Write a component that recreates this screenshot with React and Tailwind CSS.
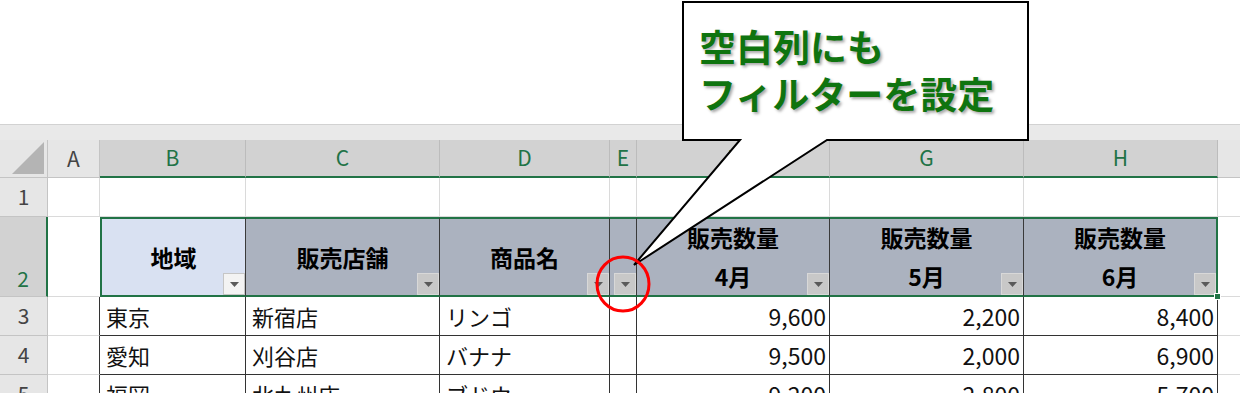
import React from "react";

const FONT = { fontFamily: '"Noto Sans CJK JP", "Noto Sans", sans-serif' };

function FilterBtn({ light }) {
  return (
    <div
      className={
        "absolute right-0 bottom-0 w-[22px] h-[22px] flex items-center justify-center border " +
        (light ? "bg-[#f3f3f3] border-[#c6c6c6]" : "bg-[#c8c8c8] border-[#d8d8d8]")
      }
    >
      <svg width="9" height="5" viewBox="0 0 9 5">
        <path d="M0 0 H9 L4.5 5 Z" fill="#5a5a5a" />
      </svg>
    </div>
  );
}

const colLetters = ["B", "C", "D", "E", "F", "G", "H"];

const data = [
  ["3", "東京", "新宿店", "リンゴ", "9,600", "2,200", "8,400"],
  ["4", "愛知", "刈谷店", "バナナ", "9,500", "2,000", "6,900"],
  ["5", "福岡", "北九州店", "ブドウ", "9,200", "2,800", "5,700"],
];

export default function App() {
  return (
    <div className="relative w-[1240px] h-[393px] overflow-hidden bg-white text-black" style={FONT}>
      {/* top white area */}
      <div className="h-[124px] bg-white" />
      {/* band */}
      <div className="h-[16px] bg-[#e9e9e9] border-t border-[#d2d2d2]" />

      <div className="grid grid-cols-[48px_52px_146px_194px_170px_27px_193px_194px_194px_1fr]">
        {/* Column headers */}
        <div className="h-[38px] bg-[#e6e6e6] border-r border-b border-[#c4c4c4] relative flex items-end justify-end pr-[3px] pb-[3px]">
          <svg width="32" height="32" viewBox="0 0 32 32">
            <path d="M32 0 V32 H0 Z" fill="#b4b4b4" />
          </svg>
        </div>
        <div className="h-[38px] bg-[#e6e6e6] border-r border-b border-[#c4c4c4] flex items-center justify-center text-[21px] text-[#444]">
          A
        </div>
        {colLetters.map((c) => (
          <div
            key={c}
            className="h-[38px] bg-[#d2d2d2] border-r border-[#bcbcbc] border-b-2 border-b-[#217346] flex items-center justify-center text-[21px] text-[#217346]"
          >
            {c}
          </div>
        ))}
        <div className="h-[38px] bg-[#e6e6e6] border-b border-[#c4c4c4]" />

        {/* Row 1 */}
        <div className="h-[39px] bg-[#e6e6e6] border-r border-b border-[#c4c4c4] flex items-center justify-center text-[21px] text-[#444]">
          1
        </div>
        {Array.from({ length: 8 }).map((_, i) => (
          <div key={i} className="h-[39px] bg-white border-r border-b border-[#dadada]" />
        ))}
        <div className="h-[39px] bg-white border-b border-[#dadada]" />

        {/* Row 2 */}
        <div className="h-[80px] bg-[#d2d2d2] border-r-2 border-r-[#217346] border-b border-b-[#c4c4c4] flex items-end justify-center pb-[2px] text-[21px] text-[#217346]">
          2
        </div>
        <div className="h-[80px] bg-white border-b border-[#dadada]" />
        <div className="h-[80px] relative bg-[#d9e1f2] border-l-2 border-t-2 border-b-2 border-[#217346] border-r border-r-[#3a3a3a] flex items-center justify-center text-[23px] font-bold">
          地域
          <FilterBtn light />
        </div>
        <div className="h-[80px] relative bg-[#abb2bf] border-t-2 border-b-2 border-[#217346] border-r border-r-[#3a3a3a] flex items-center justify-center text-[23px] font-bold">
          販売店舗
          <FilterBtn />
        </div>
        <div className="h-[80px] relative bg-[#abb2bf] border-t-2 border-b-2 border-[#217346] border-r border-r-[#3a3a3a] flex items-center justify-center text-[23px] font-bold">
          商品名
          <FilterBtn />
        </div>
        <div className="h-[80px] relative bg-[#abb2bf] border-t-2 border-b-2 border-[#217346] border-r border-r-[#3a3a3a]">
          <FilterBtn />
        </div>
        {["4月", "5月", "6月"].map((m, i) => (
          <div
            key={m}
            className={
              "h-[80px] relative bg-[#abb2bf] border-t-2 border-b-2 border-[#217346] flex flex-col items-center justify-center text-[23px] font-bold leading-[39px] " +
              (i === 2 ? "border-r-2" : "border-r border-r-[#3a3a3a]")
            }
          >
            <div>販売数量</div>
            <div>{m}</div>
            <FilterBtn />
            {i === 2 && (
              <div className="absolute -right-[5px] -bottom-[5px] w-[7px] h-[7px] bg-[#217346] border border-white z-[5]" />
            )}
          </div>
        ))}
        <div className="h-[80px] bg-white border-b border-[#dadada]" />

        {/* Data rows */}
        {data.map((r) => (
          <React.Fragment key={r[0]}>
            <div className="h-[39px] bg-[#e6e6e6] border-r border-b border-[#c4c4c4] flex items-center justify-center text-[21px] text-[#444]">
              {r[0]}
            </div>
            <div className="h-[39px] bg-white border-r border-r-[#333] border-b border-b-[#dadada]" />
            <div className="h-[39px] bg-white border-r border-b border-[#333] flex items-center pl-[6px] text-[22px] text-[#111]">
              {r[1]}
            </div>
            <div className="h-[39px] bg-white border-r border-b border-[#333] flex items-center pl-[6px] text-[22px] text-[#111]">
              {r[2]}
            </div>
            <div className="h-[39px] bg-white border-r border-b border-[#333] flex items-center pl-[6px] text-[22px] text-[#111]">
              {r[3]}
            </div>
            <div className="h-[39px] bg-white border-r border-b border-[#333]" />
            {[r[4], r[5], r[6]].map((n, j) => (
              <div
                key={j}
                className="h-[39px] bg-white border-r border-b border-[#333] flex items-center justify-end pr-[3px] text-[23px] text-[#111]"
              >
                {n}
              </div>
            ))}
            <div className="h-[39px] bg-white border-b border-[#dadada]" />
          </React.Fragment>
        ))}
      </div>

      {/* Callout + red circle overlay */}
      <svg className="absolute left-0 top-0 pointer-events-none z-10" width="1240" height="393" viewBox="0 0 1240 393">
        <path
          d="M683 2 H1028 V140 H827 L634 265 L740 140 H683 Z"
          fill="#ffffff"
          stroke="#000000"
          strokeWidth="2"
          strokeLinejoin="miter"
        />
        <ellipse cx="623" cy="284" rx="26" ry="27" fill="none" stroke="#ff0000" strokeWidth="3" />
      </svg>
      <div className="absolute left-[699px] top-[23px] z-20 text-[37px] font-bold leading-[47px] text-[#0f740f] [text-shadow:2px_2px_3px_rgba(0,0,0,0.35)]">
        <div>空白列にも</div>
        <div>フィルターを設定</div>
      </div>
    </div>
  );
}
